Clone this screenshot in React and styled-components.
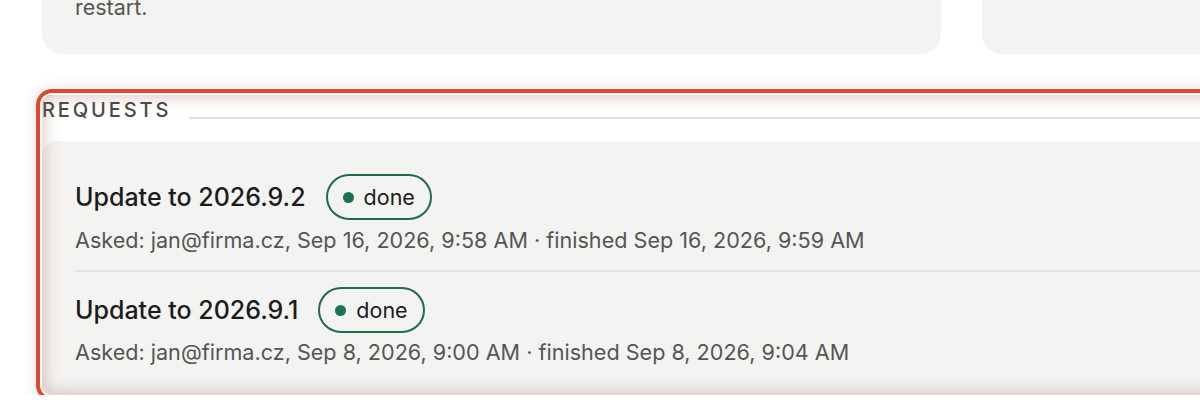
import React from 'react'
import styled, { createGlobalStyle } from 'styled-components'

const Global = createGlobalStyle`
  html, body {
    margin: 0;
    padding: 0;
    background: #ffffff;
    overflow: hidden;
  }
  body {
    font-family: Inter, "Noto Sans", "Liberation Sans", sans-serif;
    color: #1c1c1c;
  }
`

const Page = styled.div`
  width: 1900px;
  padding-left: 42px;
  box-sizing: border-box;
  margin-top: -47px;
`

const TopRow = styled.div`
  display: grid;
  grid-template-columns: 899px 899px;
  gap: 41px;
`

const InfoCard = styled.div`
  background: #f3f3f1;
  border-radius: 20px;
  padding: 40px 33px 33px;
  font-size: 21.5px;
  line-height: 28px;
  color: #555555;
`

const Section = styled.section`
  position: relative;
  margin-top: 41px;
  width: 1840px;
  border-radius: 10px;
  box-shadow: 0 0 0 2px #ffffff, 0 0 0 6px #e0472c, 0 0 14px 6px rgba(80, 60, 60, 0.16);

  &::after {
    content: '';
    position: absolute;
    inset: 0;
    border-radius: 10px;
    pointer-events: none;
    box-shadow: inset 0 0 16px 2px rgba(150, 80, 70, 0.32);
  }
`

const Header = styled.div`
  display: flex;
  align-items: flex-end;
  height: 30px;
  margin-bottom: 16px;
`

const HeaderLabel = styled.span`
  font-size: 20px;
  line-height: 30px;
  font-weight: 500;
  letter-spacing: 2.9px;
  color: #4a4a4a;
  padding-right: 18px;
`

const HeaderRule = styled.div`
  flex: 1;
  height: 2px;
  background: #dededc;
  margin-bottom: 6px;
`

const List = styled.div`
  background: #f3f3f1;
  border-radius: 16px;
  padding: 18px 0 13px 33px;
`

const Row = styled.div`
  padding: 15px 0 16px;
  border-top: ${p => (p.first ? 'none' : '2px solid #e4e4e2')};
  display: flex;
  flex-direction: column;
  gap: ${p => (p.first ? '6px' : '5px')};
`

const TitleLine = styled.div`
  display: flex;
  align-items: center;
  gap: 20px;
`

const Title = styled.span`
  font-size: 25px;
  font-weight: 500;
  color: #1c1c1c;
`

const Badge = styled.span`
  display: inline-flex;
  align-items: center;
  gap: 10px;
  height: 46px;
  box-sizing: border-box;
  padding: 0 15px;
  border: 2px solid #1f6b4b;
  border-radius: 999px;
  font-size: 21.5px;
  color: #1c1c1c;
`

const Dot = styled.span`
  width: 11px;
  height: 11px;
  border-radius: 50%;
  background: #1b7352;
`

const Meta = styled.div`
  font-size: 21.6px;
  line-height: 28px;
  color: #555555;
`

const requests = [
  {
    title: 'Update to 2026.9.2',
    meta: 'Asked: jan@firma.cz, Sep 16, 2026, 9:58 AM · finished Sep 16, 2026, 9:59 AM',
  },
  {
    title: 'Update to 2026.9.1',
    meta: 'Asked: jan@firma.cz, Sep 8, 2026, 9:00 AM · finished Sep 8, 2026, 9:04 AM',
  },
]

const App = () => {
  return (
    <>
      <Global />
      <Page>
        <TopRow>
          <InfoCard>restart.</InfoCard>
          <InfoCard>&nbsp;</InfoCard>
        </TopRow>
        <Section>
          <Header>
            <HeaderLabel>REQUESTS</HeaderLabel>
            <HeaderRule />
          </Header>
          <List>
            {requests.map((r, i) => (
              <Row key={r.title} first={i === 0}>
                <TitleLine>
                  <Title>{r.title}</Title>
                  <Badge>
                    <Dot />
                    done
                  </Badge>
                </TitleLine>
                <Meta>{r.meta}</Meta>
              </Row>
            ))}
          </List>
        </Section>
      </Page>
    </>
  )
}

export default App
